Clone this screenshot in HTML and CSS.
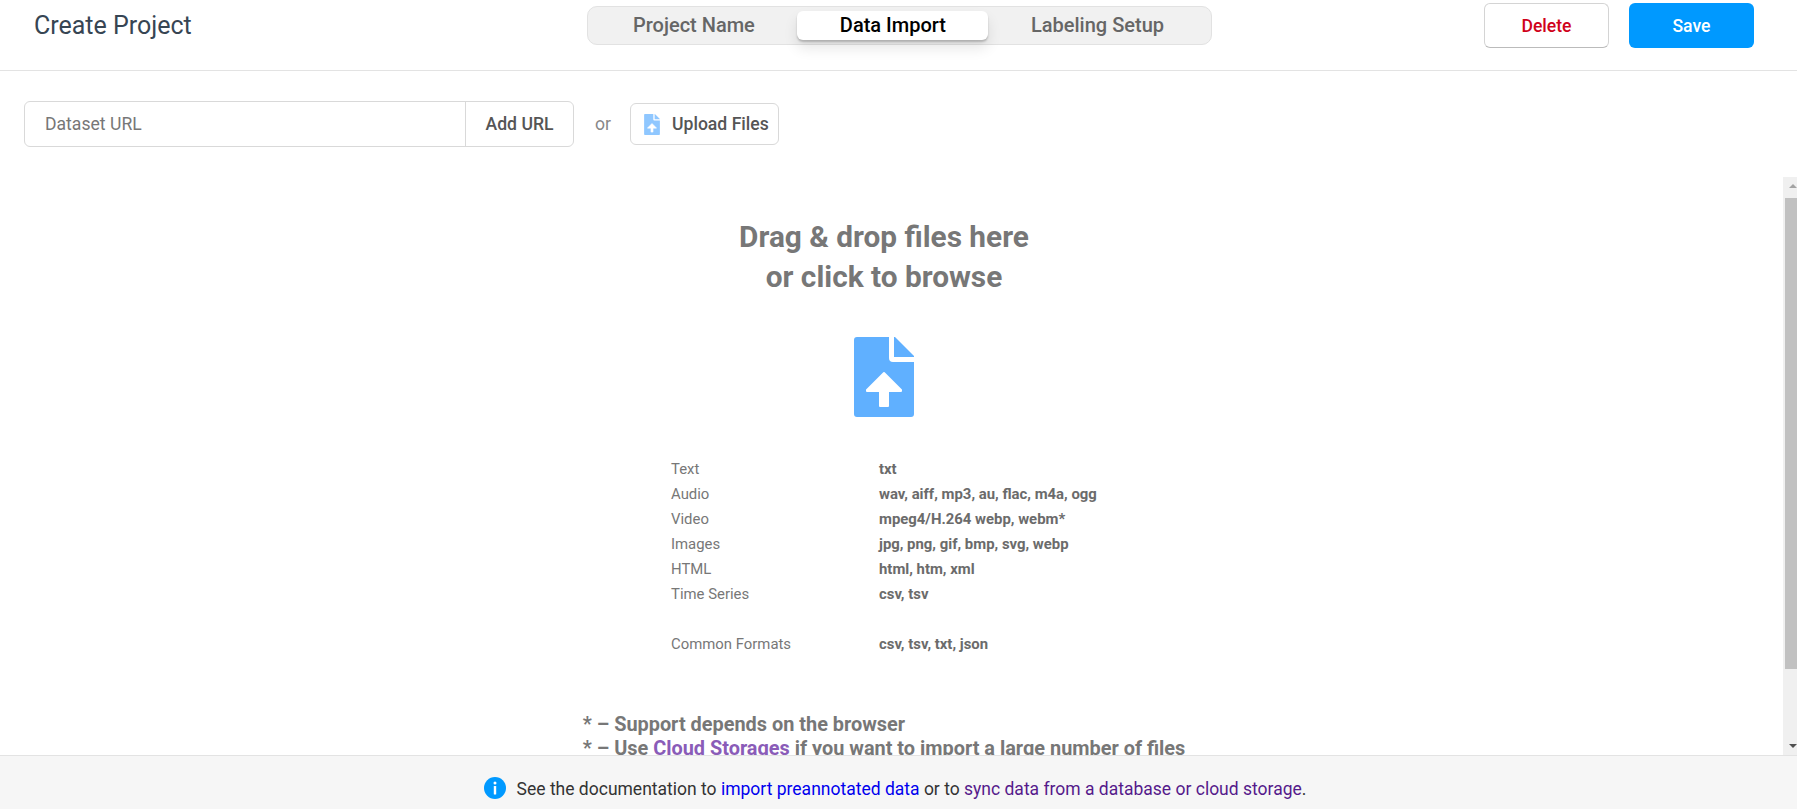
FILE: index.html
```html
<!DOCTYPE html>
<html lang="en">
<head>
<meta charset="utf-8">
<title>Create Project</title>
<link rel="stylesheet" href="styles.css">
</head>
<body>
<svg class="defs" width="0" height="0" aria-hidden="true">
  <symbol id="file-up" viewBox="0 0 60 80">
    <path d="M3 0H35V21a4 4 0 0 0 4 4H60V77a3 3 0 0 1-3 3H3a3 3 0 0 1-3-3V3a3 3 0 0 1 3-3z"/>
    <path d="M40 0h1L60 19v1H40z"/>
    <path class="arrow" d="M30 36L47 53v1H34V69H26V54H13V53z"/>
  </symbol>
</svg>
<header class="top">
  <h1 class="title">Create Project</h1>
  <nav class="steps">
    <span class="step first">Project Name</span>
    <span class="step active">Data Import</span>
    <span class="step">Labeling Setup</span>
  </nav>
  <div class="actions">
    <button class="btn danger">Delete</button>
    <button class="btn primary">Save</button>
  </div>
</header>
<section class="import-row">
  <div class="url-group">
    <span class="url-input">Dataset URL</span>
    <span class="url-add">Add URL</span>
  </div>
  <span class="or">or</span>
  <button class="upload"><svg class="upload-icon"><use href="#file-up"/></svg>Upload Files</button>
</section>
<main class="scroller">
  <div class="content">
    <h2 class="drop-title">Drag &amp; drop files here<br>or click to browse</h2>
    <svg class="drop-icon"><use href="#file-up"/></svg>
    <dl class="formats">
      <dt>Text</dt><dd>txt</dd>
      <dt>Audio</dt><dd>wav, aiff, mp3, au, flac, m4a, ogg</dd>
      <dt>Video</dt><dd>mpeg4/H.264 webp, webm*</dd>
      <dt>Images</dt><dd>jpg, png, gif, bmp, svg, webp</dd>
      <dt>HTML</dt><dd>html, htm, xml</dd>
      <dt>Time Series</dt><dd>csv, tsv</dd>
      <dt class="spacer">&nbsp;</dt><dd class="spacer">&nbsp;</dd>
      <dt>Common Formats</dt><dd>csv, tsv, txt, json</dd>
    </dl>
    <p class="note">* – Support depends on the browser<br>* – Use <a class="cloud">Cloud Storages</a> if you want to import a large number of files</p>
  </div>
  <div class="scrollbar">
    <span class="sb-up"></span>
    <span class="sb-thumb"></span>
    <span class="sb-down"></span>
  </div>
</main>
<footer class="foot">
  <svg class="info" viewBox="0 0 22 22"><circle cx="11" cy="11" r="11"/><rect class="glyph" x="9.8" y="9" width="2.4" height="8.5" rx="0.6"/><circle class="glyph" cx="11" cy="5.9" r="1.5"/></svg>
  <span>See the documentation to <a class="link">import preannotated data</a> or to <a class="visited">sync data from a database or cloud storage</a>.</span>
</footer>
</body>
</html>
```
FILE: styles.css
```css
* { box-sizing: border-box; }
html, body { height: 100%; margin: 0; overflow: hidden; }
body {
  display: flex;
  flex-direction: column;
  background: #fff;
  font-family: Roboto, "Liberation Sans", sans-serif;
}
.defs { position: absolute; }
.arrow { fill: #fff; stroke: #fff; stroke-width: 2; stroke-linejoin: round; }

.top {
  display: grid;
  grid-template-columns: 1fr auto 1fr;
  align-items: start;
  height: 71px;
  flex: none;
  border-bottom: 1px solid #e3e3e3;
}
.title {
  margin: 9px 0 0 34px;
  font-size: 25px;
  line-height: 34px;
  font-weight: 400;
  color: #374553;
}
.steps {
  display: flex;
  margin: 6px 0 0 2px;
  height: 39px;
  padding: 4px;
  background: #f1f1f1;
  border: 1px solid #e2e2e2;
  border-radius: 10px;
}
.step {
  padding: 0 43px;
  font-size: 20px;
  font-weight: 500;
  line-height: 29px;
  color: #666;
}
.step.first { padding-left: 41px; padding-right: 42px; }
.step.active {
  padding-right: 42px;
  background: #fff;
  color: #000;
  border-radius: 6px;
  box-shadow: 0 2px 2px rgba(0,0,0,.2), 0 8px 14px rgba(0,0,0,.1);
}
.actions {
  display: flex;
  justify-content: flex-end;
  gap: 20px;
  margin-top: 3px;
  padding-right: 43px;
}
.btn {
  width: 125px;
  height: 45px;
  font: 500 17.6px Roboto, sans-serif;
  border-radius: 6px;
}
.danger { background: #fff; color: #d0021b; border: 1px solid #d4d4d4; border-bottom-color: #bbb; }
.primary { background: #09f; color: #fff; border: 0; }

.import-row {
  display: flex;
  align-items: center;
  flex: none;
  height: 106px;
  padding: 0 0 0 24px;
}
.url-group {
  display: flex;
  width: 550px;
  height: 46px;
  border: 1px solid #d9d9d9;
  border-radius: 6px;
}
.url-input {
  flex: 1;
  padding-left: 20px;
  font-size: 17.6px;
  line-height: 44px;
  color: #777;
}
.url-add {
  width: 108px;
  text-align: center;
  border-left: 1px solid #d9d9d9;
  font-size: 17.6px;
  font-weight: 500;
  line-height: 44px;
  color: #555;
}
.or { margin-left: 21px; font-size: 17.6px; color: #888; }
.upload {
  display: flex;
  align-items: center;
  width: 149px;
  height: 42px;
  margin-left: 19px;
  padding: 0 0 0 13px;
  background: #fff;
  border: 1px solid #d9d9d9;
  border-radius: 6px;
  font: 500 17.6px Roboto, sans-serif;
  color: #555;
}
.upload-icon { width: 16px; height: 21px; margin-right: 12px; fill: #8fc7ff; }

.scroller {
  flex: 1;
  min-height: 0;
  display: flex;
  overflow: hidden;
}
.content {
  flex: 1;
  padding: 40px 15px 0 0;
  display: flex;
  flex-direction: column;
  align-items: center;
}
.drop-title {
  margin: 0;
  font-size: 29.8px;
  line-height: 40px;
  font-weight: 700;
  color: #777;
  text-align: center;
}
.drop-icon { flex: none; width: 60px; height: 80px; margin-top: 40px; fill: #60b0ff; }
.formats {
  display: grid;
  grid-template-columns: 208px 218px;
  grid-auto-rows: 25px;
  margin: 40px 0 0;
  font-size: 14.9px;
  line-height: 25px;
  color: #777;
}
.formats dt, .formats dd { white-space: nowrap; }
.formats dd { margin: 0; font-weight: 700; color: #6b6b6b; }
.note {
  margin: 56px 0 0;
  font-size: 19.9px;
  line-height: 24px;
  font-weight: 700;
  color: #777;
  white-space: nowrap;
}
.cloud { color: #8a5cb8; }
.scrollbar {
  flex: none;
  position: relative;
  width: 14px;
  display: flex;
  flex-direction: column;
  background: #f0f0f0;
}
.sb-thumb {
  position: absolute;
  top: 21px;
  left: 2px;
  right: 0;
  height: 471px;
  background: #c1c1c1;
}
.sb-up, .sb-down {
  position: absolute;
  left: 6px;
  width: 0; height: 0;
  border-left: 4px solid transparent;
  border-right: 4px solid transparent;
}
.sb-up { top: 7px; border-bottom: 4px solid #a3a3a3; }
.sb-down { bottom: 7px; border-top: 4px solid #505050; }

.foot {
  flex: none;
  height: 54px;
  display: flex;
  justify-content: center;
  align-items: flex-start;
  gap: 11px;
  padding: 21px 7px 0 0;
  background: #f6f6f6;
  border-top: 1px solid #e3e3e3;
  font-size: 17.5px;
  line-height: 24px;
  color: #333;
}
.info { flex: none; width: 22px; height: 22px; fill: #09f; }
.info .glyph { fill: #fff; }
.link { color: #00e; }
.visited { color: #551a8b; }
```
